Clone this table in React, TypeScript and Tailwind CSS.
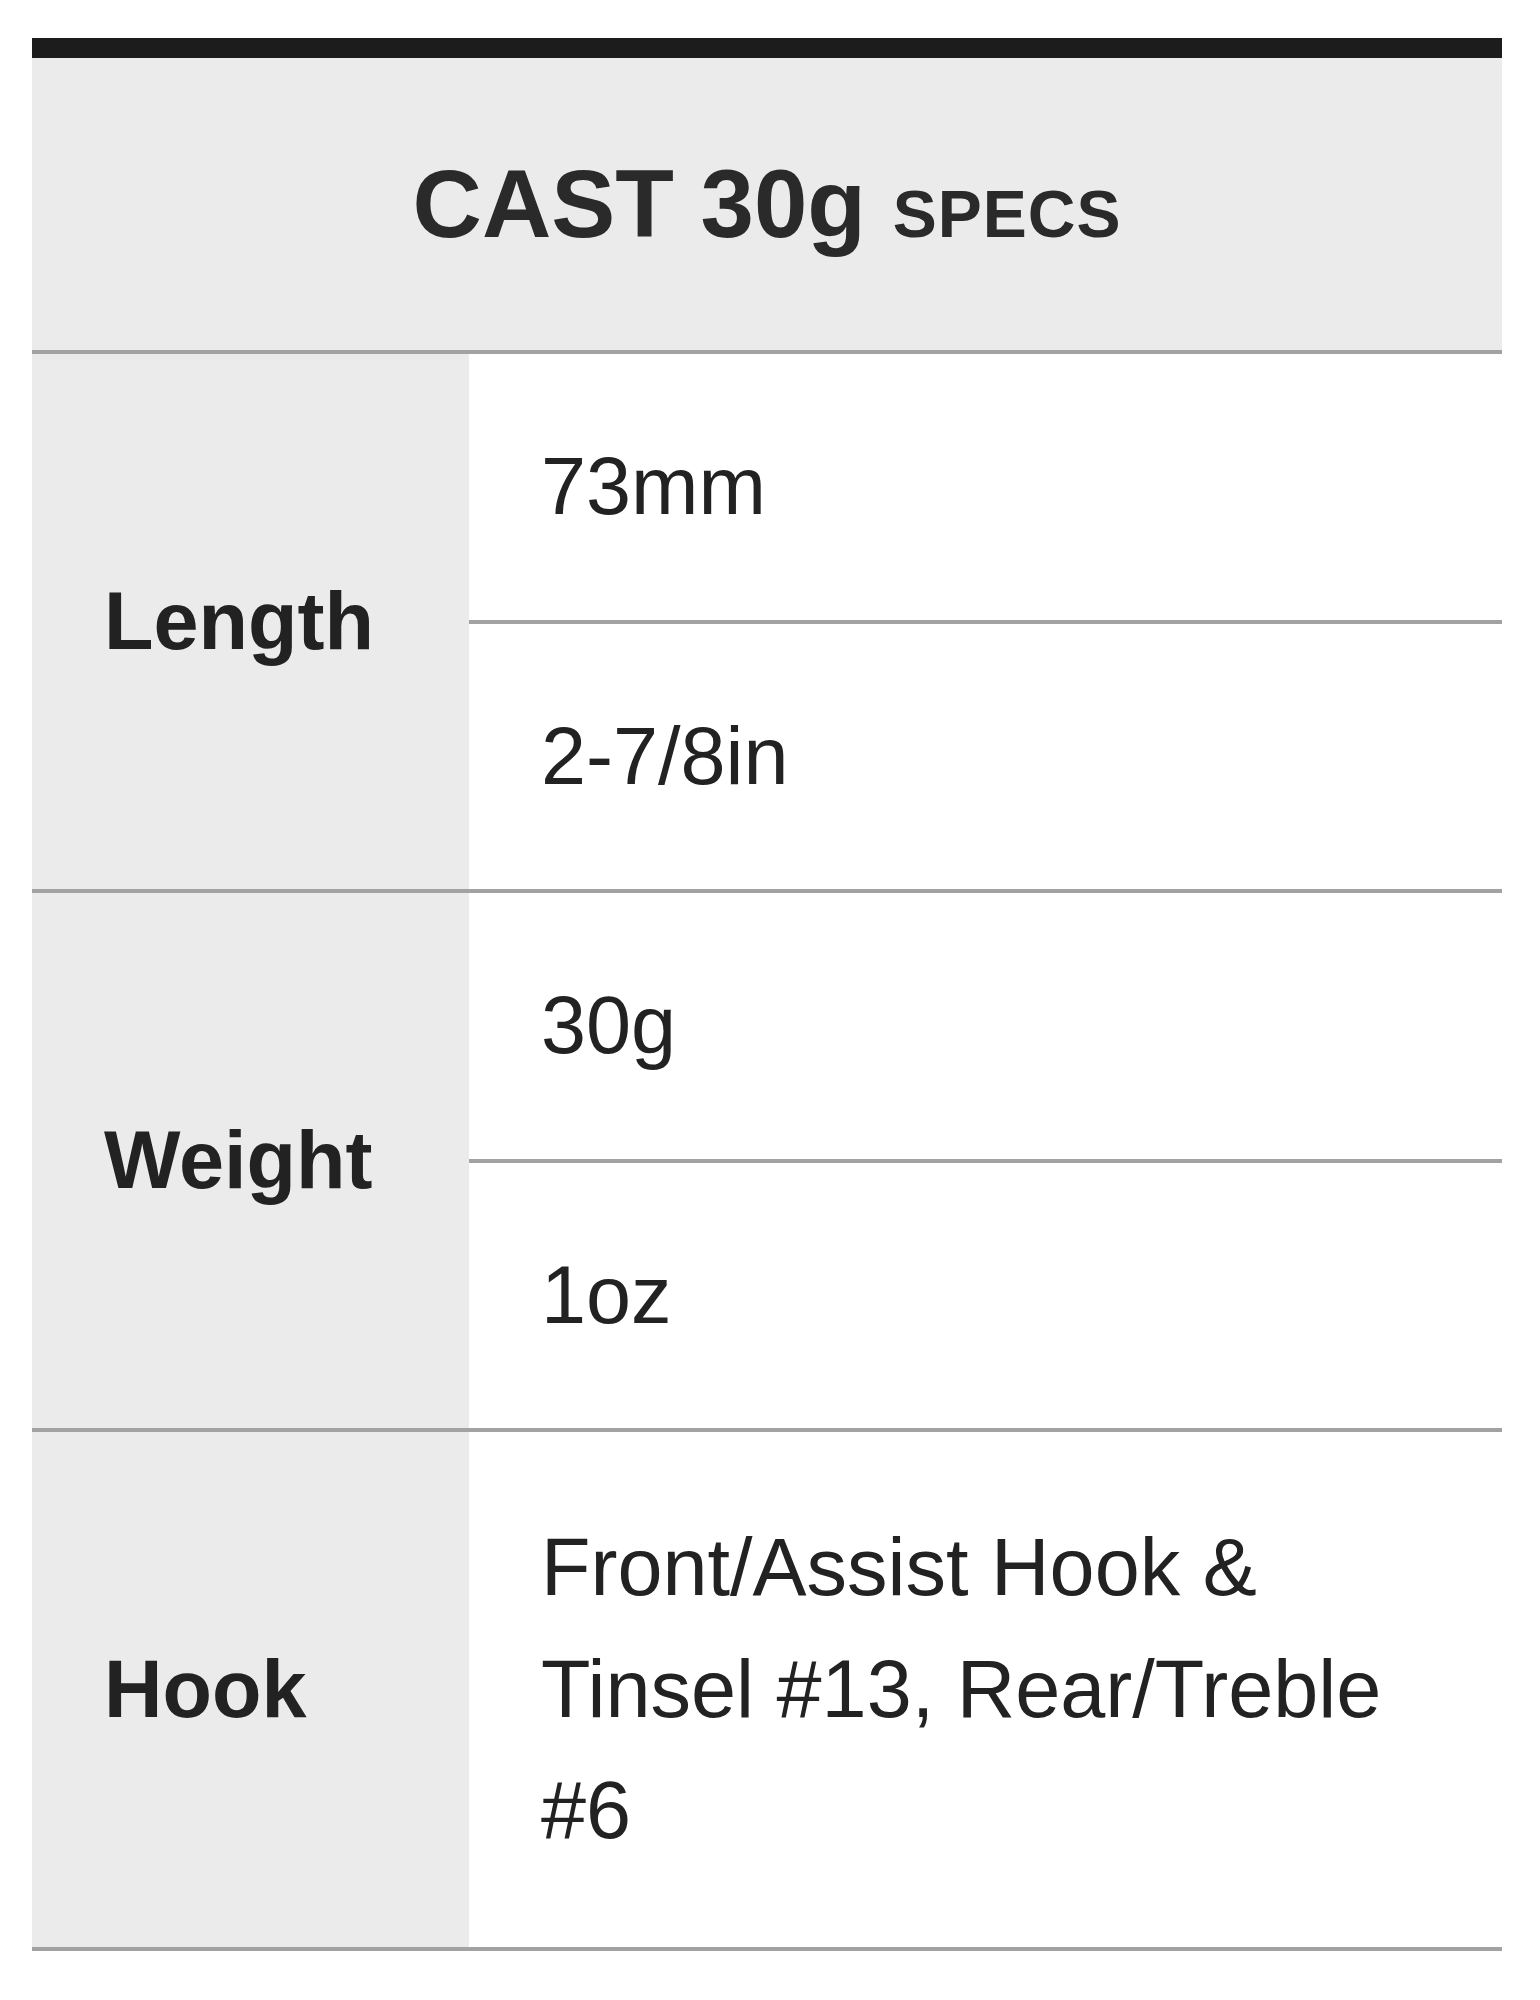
const specs = [
  { label: 'Length', values: ['73mm', '2-7/8in'] },
  { label: 'Weight', values: ['30g', '1oz'] },
  { label: 'Hook', values: ['Front/Assist Hook & Tinsel #13, Rear/Treble #6'] }
];

const SpecGroup = ({ label, values }: { label: string; values: string[] }) => (
  <div className="flex border-b-4 border-[#a2a2a2]">
    <div className="flex w-[437px] shrink-0 items-center bg-[#ebebeb] px-[72px] font-bold">{label}</div>
    <div className="flex flex-1 flex-col">
      {values.map((value, i) => (
        <div
          key={value}
          className={`${i < values.length - 1 ? 'border-b-4 border-[#a2a2a2]' : ''} ${
            values.length === 1 ? 'py-[75px]' : 'py-[72px]'
          } px-[72px]`}>
          {value}
        </div>
      ))}
    </div>
  </div>
);

export default function App() {
  return (
    <div className="min-h-[2000px] bg-white pt-[38px] font-['Liberation_Sans',Arial,sans-serif] text-[#222]">
      <div className="ml-[32px] w-[1470px] border-t-[20px] border-[#1c1c1c] text-[81px] leading-[1.5]">
        <div className="border-b-4 border-[#a2a2a2] bg-[#ebebeb] py-[74px] text-center text-[96px] font-bold text-[#2a2a2a]">
          CAST 30g <span className="text-[66px] tracking-[1px]">SPECS</span>
        </div>
        {specs.map(spec => (
          <SpecGroup key={spec.label} label={spec.label} values={spec.values} />
        ))}
      </div>
    </div>
  );
}
